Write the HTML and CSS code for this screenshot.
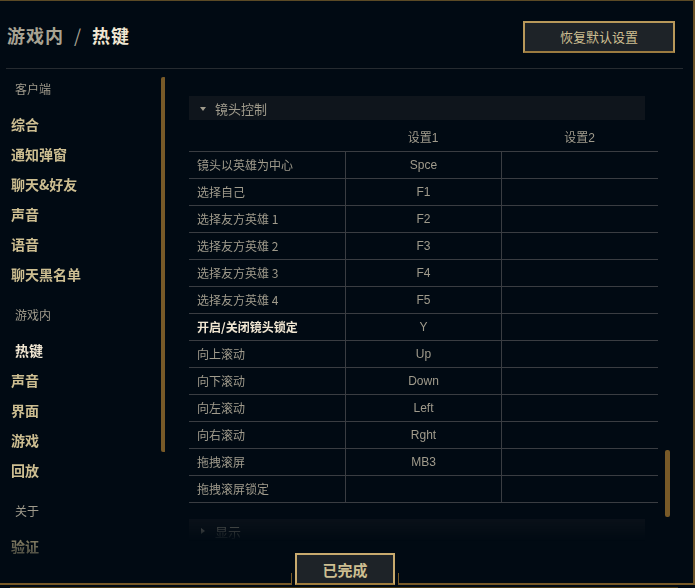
FILE: index.html
```html
<!DOCTYPE html>
<html lang="zh">
<head>
<meta charset="utf-8">
<title>游戏内 / 热键</title>
<link rel="stylesheet" href="styles.css">
</head>
<body>
<div class="frame">
  <header class="header">
    <h1 class="title"><span class="crumb">游戏内</span><span class="sep">/</span><span class="current">热键</span></h1>
    <button class="btn-reset">恢复默认设置</button>
  </header>
  <div class="content">
    <aside class="sidebar">
      <nav class="nav">
        <div class="nav-group">
          <div class="nav-label">客户端</div>
          <div class="nav-item">综合</div>
          <div class="nav-item">通知弹窗</div>
          <div class="nav-item">聊天&amp;好友</div>
          <div class="nav-item">声音</div>
          <div class="nav-item">语音</div>
          <div class="nav-item">聊天黑名单</div>
        </div>
        <div class="nav-group">
          <div class="nav-label">游戏内</div>
          <div class="nav-item active">热键</div>
          <div class="nav-item">声音</div>
          <div class="nav-item">界面</div>
          <div class="nav-item">游戏</div>
          <div class="nav-item">回放</div>
        </div>
        <div class="nav-group">
          <div class="nav-label">关于</div>
          <div class="nav-item">验证</div>
        </div>
      </nav>
      <div class="track"><div class="thumb thumb-left"></div></div>
    </aside>
    <main class="main">
      <div class="scroll">
        <div class="section-bar"><span class="tri-down"></span><span class="section-title">镜头控制</span></div>
        <div class="keys">
          <div class="row head"><div class="cell"></div><div class="cell">设置1</div><div class="cell">设置2</div></div>
          <div class="row"><div class="cell name">镜头以英雄为中心</div><div class="cell">Spce</div><div class="cell"></div></div>
          <div class="row"><div class="cell name">选择自己</div><div class="cell">F1</div><div class="cell"></div></div>
          <div class="row"><div class="cell name">选择友方英雄 1</div><div class="cell">F2</div><div class="cell"></div></div>
          <div class="row"><div class="cell name">选择友方英雄 2</div><div class="cell">F3</div><div class="cell"></div></div>
          <div class="row"><div class="cell name">选择友方英雄 3</div><div class="cell">F4</div><div class="cell"></div></div>
          <div class="row"><div class="cell name">选择友方英雄 4</div><div class="cell">F5</div><div class="cell"></div></div>
          <div class="row"><div class="cell name strong">开启/关闭镜头锁定</div><div class="cell">Y</div><div class="cell"></div></div>
          <div class="row"><div class="cell name">向上滚动</div><div class="cell">Up</div><div class="cell"></div></div>
          <div class="row"><div class="cell name">向下滚动</div><div class="cell">Down</div><div class="cell"></div></div>
          <div class="row"><div class="cell name">向左滚动</div><div class="cell">Left</div><div class="cell"></div></div>
          <div class="row"><div class="cell name">向右滚动</div><div class="cell">Rght</div><div class="cell"></div></div>
          <div class="row"><div class="cell name">拖拽滚屏</div><div class="cell">MB3</div><div class="cell"></div></div>
          <div class="row"><div class="cell name">拖拽滚屏锁定</div><div class="cell"></div><div class="cell"></div></div>
        </div>
        <div class="section-bar second"><span class="tri-right"></span><span class="section-title">显示</span></div>
      </div>
      <div class="track track-right"><div class="thumb thumb-right"></div></div>
    </main>
  </div>
  <div class="done-footer"><button class="btn-done">已完成</button></div>
</div>
<div class="outer-line"></div>
</body>
</html>
```

FILE: styles.css
```css
* { box-sizing: border-box; }
html, body { margin: 0; padding: 0; background: #010a13; }
body {
  width: 695px;
  height: 588px;
  overflow: hidden;
  font-family: "Liberation Sans", "Noto Sans CJK SC", sans-serif;
  color: #a09b8c;
}
.frame {
  position: relative;
  width: 695px;
  height: 585px;
  border-top: 1px solid #5b4a25;
  border-right: 2px solid #6e5427;
  border-bottom: 2px solid #785a28;
  overflow: visible;
}
.outer-line {
  width: 668px;
  height: 1px;
  margin: 2px 0 0 10px;
  background: #463714;
}
.header {
  height: 68px;
  margin: 0 10px 0 6px;
  border-bottom: 1px solid #262b30;
  display: flex;
  align-items: center;
  justify-content: space-between;
  padding-top: 4px;
}
.title {
  margin: 0 0 3px 1px;
  font-size: 18px;
  font-weight: bold;
  letter-spacing: 1px;
  font-family: "Noto Sans CJK SC", sans-serif;
  display: flex;
  align-items: baseline;
}
.crumb { color: #a8a393; }
.sep { color: #a8a393; margin: 0 10px 0 10px; font-weight: normal; }
.current { color: #f0e6d2; letter-spacing: 1px; }
.btn-reset {
  width: 152px;
  height: 32px;
  margin-right: 8px;
  background: #1e2328;
  border: 2px solid #b8985a;
  border-bottom-color: #9a7a40;
  color: #cdbe91;
  font-family: "Noto Sans CJK SC", sans-serif;
  font-size: 13px;
  padding: 0;
}
.content {
  display: flex;
  height: 514px;
}
.sidebar {
  width: 165px;
  display: flex;
  flex-shrink: 0;
  -webkit-mask-image: linear-gradient(to bottom, #000 calc(100% - 62px), rgba(0,0,0,0.25) calc(100% - 22px), transparent 100%);
  mask-image: linear-gradient(to bottom, #000 calc(100% - 62px), rgba(0,0,0,0.25) calc(100% - 22px), transparent 100%);
}
.nav {
  width: 160px;
  padding-top: 12px;
  font-family: "Noto Sans CJK SC", sans-serif;
}
.nav-group + .nav-group { margin-top: 18px; }
.nav-label {
  height: 16px;
  line-height: 16px;
  padding-left: 15px;
  font-size: 12px;
  color: #a09b8c;
  margin-bottom: 12px;
}
.nav-item {
  height: 30px;
  line-height: 30px;
  padding-left: 11px;
  font-size: 14px;
  font-weight: bold;
  color: #cdbe91;
}
.nav-item.active {
  padding-left: 15px;
  color: #f0e6d2;
}
.track {
  width: 5px;
  flex-shrink: 0;
}
.thumb {
  width: 5px;
  background: #785a28;
  border-radius: 2px;
}
.thumb-left { margin-top: 8px; height: 375px; margin-left: 1px; }
.main {
  display: flex;
  margin-left: 24px;
}
.scroll {
  width: 469px;
  height: 472px;
  overflow: hidden;
  padding-top: 27px;
  -webkit-mask-image: linear-gradient(to bottom, #000 calc(100% - 34px), transparent 100%);
  mask-image: linear-gradient(to bottom, #000 calc(100% - 34px), transparent 100%);
}
.track-right { margin-left: 7px; }
.thumb-right { margin-top: 381px; height: 67px; }
.section-bar {
  width: 456px;
  height: 24px;
  background: #0f151c;
  display: flex;
  align-items: center;
  padding-left: 11px;
  font-family: "Noto Sans CJK SC", sans-serif;
}
.section-bar.second { margin-top: 16px; }
.tri-down {
  width: 0;
  height: 0;
  border-left: 3px solid transparent;
  border-right: 3px solid transparent;
  border-top: 4px solid #a09b8c;
  margin-right: 9px;
  margin-top: 1px;
}
.tri-right {
  width: 0;
  height: 0;
  border-top: 3px solid transparent;
  border-bottom: 3px solid transparent;
  border-left: 4px solid #a09b8c;
  margin-right: 10px;
  margin-left: 1px;
}
.section-title {
  font-size: 13px;
  color: #a09b8c;
}
.keys { width: 469px; }
.row {
  display: grid;
  grid-template-columns: 156px 156px 157px;
  height: 27px;
  border-top: 1px solid #3a3d42;
}
.row:last-child { height: 28px; border-bottom: 1px solid #3a3d42; }
.row.head {
  height: 31px;
  border-top: none;
}
.cell {
  display: flex;
  align-items: center;
  justify-content: center;
  font-size: 12px;
  color: #a09b8c;
  padding-bottom: 1px;
}
.row:not(.head) .cell + .cell { border-left: 1px solid #3a3d42; }
.row.head .cell { padding-top: 3px; font-size: 12px; }
.cell.name {
  justify-content: flex-start;
  padding-left: 8px;
  font-family: "Noto Sans CJK SC", sans-serif;
}
.cell.name.strong {
  font-weight: bold;
  color: #f0e6d2;
}
.done-footer {
  position: absolute;
  left: 291px;
  bottom: -2px;
  width: 108px;
  height: 32px;
}
.done-footer::before {
  content: "";
  position: absolute;
  left: 0;
  right: 0;
  bottom: 0;
  height: 12px;
  background: #010a13;
  border-left: 1px solid #785a28;
  border-right: 1px solid #785a28;
}
.btn-done {
  position: relative;
  display: block;
  width: 100px;
  height: 32px;
  margin: 0 auto;
  padding: 0;
  background: #1e2328;
  border: 2px solid #c8aa6e;
  border-bottom-color: #a07c3c;
  color: #cdbe91;
  font-family: "Noto Sans CJK SC", sans-serif;
  font-size: 15px;
  font-weight: bold;
}
```
